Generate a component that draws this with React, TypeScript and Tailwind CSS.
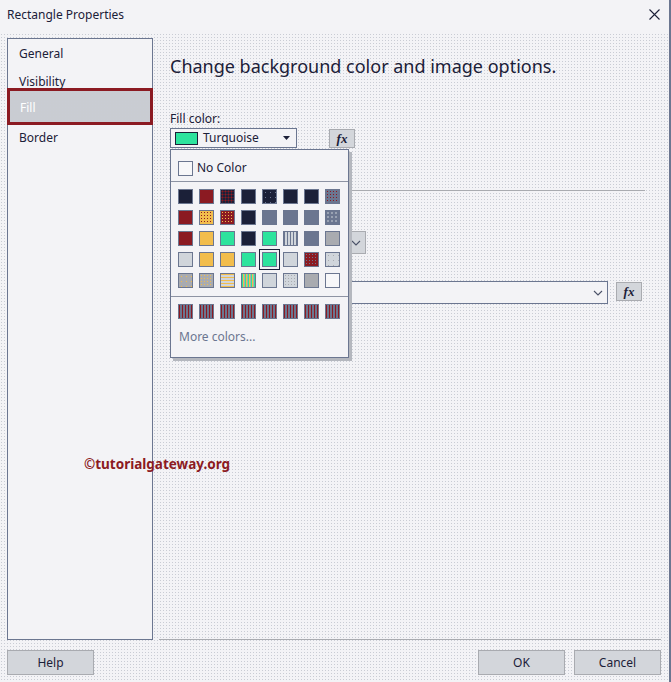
import React from 'react';

const dots = 'bg-[radial-gradient(circle,#c9ccd4_0.7px,transparent_0.9px)] bg-[length:3px_3px]';

// swatch classes, row by row, as they sit in the colour picker
const swatchRows: string[][] = [
  [
    'bg-[#1b2038]',
    'bg-[#8b1a22]',
    'bg-[#1b2038] bg-[radial-gradient(circle,#8b1a22_0.9px,transparent_1.1px)] bg-[length:3px_3px]',
    'bg-[#1b2038]',
    'bg-[#1b2038] bg-[radial-gradient(circle,#6b7690_0.6px,transparent_0.8px)] bg-[length:5px_5px]',
    'bg-[#1b2038]',
    'bg-[#6b7690] bg-[radial-gradient(circle,#1b2038_0.9px,transparent_1.1px)] bg-[length:2px_2px]',
    'bg-[#6b7690] bg-[radial-gradient(circle,#8b1a22_0.8px,transparent_1px)] bg-[length:3px_3px]',
  ],
  [
    'bg-[#8b1a22]',
    'bg-[#f2bd4c] bg-[radial-gradient(circle,#8b1a22_0.7px,transparent_0.9px)] bg-[length:3px_3px]',
    'bg-[#8b1a22] bg-[radial-gradient(circle,#f2bd4c_0.7px,transparent_0.9px)] bg-[length:3px_3px]',
    'bg-[#1b2038]',
    'bg-[#6b7690]',
    'bg-[#6b7690]',
    'bg-[#6b7690]',
    'bg-[#6b7690] bg-[radial-gradient(circle,#d0d5db_0.6px,transparent_0.8px)] bg-[length:4px_4px]',
  ],
  [
    'bg-[#8b1a22]',
    'bg-[#f2bd4c]',
    'bg-[#2de39d]',
    'bg-[#2de39d] bg-[radial-gradient(circle,#1b2038_0.9px,transparent_1.1px)] bg-[length:2px_2px]',
    'bg-[#2de39d]',
    'bg-[#d0d5db] bg-[repeating-linear-gradient(90deg,#6b7690_0_1px,transparent_1px_3px)]',
    'bg-[#6b7690]',
    'bg-[#d0d5db] bg-[radial-gradient(circle,#a9abb0_0.8px,transparent_1px)] bg-[length:2px_2px]',
  ],
  [
    'bg-[#d0d5db]',
    'bg-[#f2bd4c]',
    'bg-[#f2bd4c]',
    'bg-[#2de39d]',
    'bg-[#2de39d]',
    'bg-[#d0d5db]',
    'bg-[#8b1a22] bg-[radial-gradient(circle,#6b7690_0.7px,transparent_0.9px)] bg-[length:3px_3px]',
    'bg-[#d0d5db] bg-[radial-gradient(circle,#a9abb0_0.6px,transparent_0.8px)] bg-[length:5px_5px]',
  ],
  [
    'bg-[#a9abb0] bg-[radial-gradient(circle,#f2bd4c_0.5px,transparent_0.7px)] bg-[length:5px_5px]',
    'bg-[#a9abb0] bg-[radial-gradient(circle,#f2bd4c_0.8px,transparent_1px)] bg-[length:3px_3px]',
    'bg-[#d0d5db] bg-[repeating-linear-gradient(0deg,#f2bd4c_0_1px,transparent_1px_3px)]',
    'bg-[#a9abb0] bg-[repeating-linear-gradient(90deg,#2de39d_0_1px,#f2bd4c_1px_2px,transparent_2px_3px)]',
    'bg-[#d0d5db]',
    'bg-[#d0d5db] bg-[radial-gradient(circle,#a9abb0_0.8px,transparent_1px)] bg-[length:3px_3px]',
    'bg-[#d0d5db] bg-[radial-gradient(circle,#a9abb0_0.8px,transparent_1px)] bg-[length:2px_2px]',
    'bg-[#f7f7f9]',
  ],
];

const recentSwatch =
  'bg-[#6b7690] bg-[repeating-linear-gradient(90deg,#8b1a22_0_1px,transparent_1px_3px)]';

const Chevron = () => (
  <svg width="10" height="6" viewBox="0 0 10 6" className="text-[#4a5168]">
    <path d="M1 1 L5 5 L9 1" fill="none" stroke="currentColor" strokeWidth="1.1" />
  </svg>
);

const FxButton = ({ className }: { className?: string }) => (
  <div
    className={`w-[26px] h-[19px] flex items-center justify-center border border-[#a9abb0] bg-[#d3d6db] text-[#1b2038] italic font-bold text-[13px] leading-none ${className ?? ''}`}
    style={{ fontFamily: '"Liberation Serif", serif' }}
  >
    fx
  </div>
);

const NavItem = ({ label }: { label: string }) => (
  <div className="pl-[11px] leading-[16px] text-[12px] text-[#1b2038]">{label}</div>
);

const ColorPopup = () => (
  <div className="absolute left-[11px] top-[111px] w-[179px] h-[209px] border border-[#6b7690] bg-[#f3f3f6] shadow-[3px_3px_0_#b4b7be]">
    <div className="flex items-center gap-[4px] pl-[7px] pt-[10px] pb-[5px] border-b border-[#8d93a3]">
      <div className="w-[15px] h-[15px] border border-[#6b7690] bg-[#f7f7f9]" />
      <span className="text-[12px] leading-[16px] text-[#1b2038]">No Color</span>
    </div>
    <div className="grid grid-cols-[repeat(8,15px)] gap-x-[6px] gap-y-[6px] pl-[7px] pt-[7px] pb-[8px] border-b border-[#8d93a3]">
      {swatchRows.map((row, r) =>
        row.map((cls, c) => (
          <div
            key={`${r}-${c}`}
            className={`w-[15px] h-[15px] border border-[#6b7690] ${cls} ${
              r === 3 && c === 4 ? 'outline-1 outline-offset-2 outline-[#1b2038]' : ''
            }`}
          />
        ))
      )}
    </div>
    <div className="grid grid-cols-[repeat(8,15px)] gap-x-[6px] pl-[7px] pt-[7px]">
      {Array.from({ length: 8 }).map((_, i) => (
        <div key={i} className={`w-[15px] h-[15px] border border-[#6b7690] ${recentSwatch}`} />
      ))}
    </div>
    <div className="pl-[8px] pt-[10px] text-[12px] leading-[16px] text-[#6b7690]">More colors...</div>
  </div>
);

export default function App() {
  return (
    <div
      className="w-[671px] h-[682px] flex flex-col bg-[#f3f3f6] border-r-2 border-[#6b7690] relative overflow-hidden"
      style={{ fontFamily: '"Noto Sans", "Open Sans", sans-serif' }}
    >
      {/* title bar */}
      <div className="h-[33px] flex items-center justify-between pl-[7px] pr-[9px] shrink-0">
        <span className="text-[12px] text-[#1b2038] -mt-[4px]">Rectangle Properties</span>
        <svg width="11" height="11" viewBox="0 0 11 11" className="-mt-[4px]">
          <path d="M0.5 0.5 L10.5 10.5 M10.5 0.5 L0.5 10.5" stroke="#1b2038" strokeWidth="1.1" />
        </svg>
      </div>

      <div className={`flex-1 flex flex-col ${dots}`}>
        <div className="flex h-[607px] pt-[5px] pl-[7px]">
          {/* left nav */}
          <div className="w-[146px] h-[602px] border border-[#6b7690] bg-[#f3f3f6] pt-[7px] shrink-0">
            <NavItem label="General" />
            <div className="mt-[12px]">
              <NavItem label="Visibility" />
            </div>
            <div
              className={`-mx-px -mt-[2px] h-[37px] border-[3px] border-[#8b1a22] bg-[#c9ccd2] ${dots} pt-[9px] pl-[10px] text-[12px] leading-[16px] text-white`}
            >
              Fill
            </div>
            <div className="mt-[5px]">
              <NavItem label="Border" />
            </div>
          </div>

          {/* content */}
          <div className="relative flex-1 ml-[6px] mr-[8px] h-[602px] border-b border-[#a9abb0] pl-[11px] pr-[16px]">
            <h1 className="mt-[15px] text-[18px] leading-[26px] text-[#1b2038] font-normal">
              Change background color and image options.
            </h1>
            <div className="mt-[32px] text-[12px] leading-[16px] text-[#1b2038]">Fill color:</div>
            <div className="mt-[1px] flex items-start">
              <div className="w-[127px] h-[20px] border border-[#6b7690] bg-[#f3f3f6] flex items-center pl-[4px] pr-[6px]">
                <div className="w-[23px] h-[13px] border border-[#1b2038] bg-[#2de39d]" />
                <span className="ml-[5px] text-[12px] leading-[16px] text-[#1b2038] flex-1">Turquoise</span>
                <svg width="7" height="4" viewBox="0 0 7 4">
                  <path d="M0 0 H7 L3.5 4 Z" fill="#1b2038" />
                </svg>
              </div>
              <FxButton className="ml-[32px] mt-px" />
            </div>
            <div className="mt-[42px] h-px bg-[#a9abb0]" />

            <div className="mt-[40px] w-[196px] h-[23px] border border-[#a9abb0] flex justify-end">
              <div className="w-[18px] h-full bg-[#d3d6db] flex items-center justify-center">
                <Chevron />
              </div>
            </div>

            <div className="mt-[27px] flex items-start">
              <div className="w-[438px] h-[23px] border border-[#6b7690] bg-[#f3f3f6] flex items-center justify-end pr-[4px]">
                <Chevron />
              </div>
              <FxButton className="ml-[8px] mt-px" />
            </div>

            <ColorPopup />
          </div>
        </div>

        {/* footer buttons */}
        <div className="flex items-start pt-[10px] pl-[7px] pr-[8px]">
          <button className="w-[87px] h-[25px] border border-[#a9abb0] bg-[#d3d6db] text-[12px] text-[#1b2038]">
            Help
          </button>
          <div className="flex-1" />
          <button className="w-[87px] h-[25px] border border-[#a9abb0] bg-[#d3d6db] text-[12px] text-[#1b2038]">
            OK
          </button>
          <button className="ml-[9px] w-[87px] h-[25px] border border-[#a9abb0] bg-[#d3d6db] text-[12px] text-[#1b2038]">
            Cancel
          </button>
        </div>
      </div>

      <div className="absolute left-[84px] top-[455px] text-[13.5px] font-bold text-[#8b1a22] leading-[18px]">
        ©tutorialgateway.org
      </div>
    </div>
  );
}
